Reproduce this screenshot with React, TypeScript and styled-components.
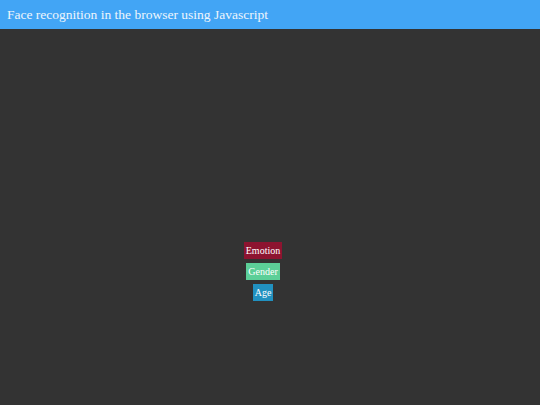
import React from 'react';
import styled, { createGlobalStyle } from 'styled-components';

const GlobalStyle = createGlobalStyle`
  html, body {
    margin: 0;
    padding: 0;
    background-color: #333333;
    font-family: "Liberation Serif", "Times New Roman", serif;
  }
`;

const Page = styled.div`
  min-height: 405px;
  background-color: #333333;
`;

const Header = styled.header`
  height: 29px;
  background-color: #42a5f5;
  display: flex;
  align-items: center;
  padding-left: 7px;
`;

const Title = styled.h1`
  margin: 0;
  font-size: 13.5px;
  font-weight: normal;
  color: #eef5fc;
`;

const Stage = styled.main`
  display: flex;
  flex-direction: column;
  align-items: center;
  gap: 4px;
  padding-top: 213px;
  padding-right: 14px;
`;

const Badge = styled.span<{ $bg: string }>`
  display: inline-block;
  background-color: ${(p) => p.$bg};
  color: #ffffff;
  font-size: 10px;
  line-height: 17px;
  padding: 0 2px;
`;

const App = () => {
  return (
    <Page>
      <GlobalStyle />
      <Header>
        <Title>Face recognition in the browser using Javascript</Title>
      </Header>
      <Stage>
        <Badge $bg="#8d1430">Emotion</Badge>
        <Badge $bg="#5ccf98">Gender</Badge>
        <Badge $bg="#2191c0">Age</Badge>
      </Stage>
    </Page>
  );
};

export default App;
